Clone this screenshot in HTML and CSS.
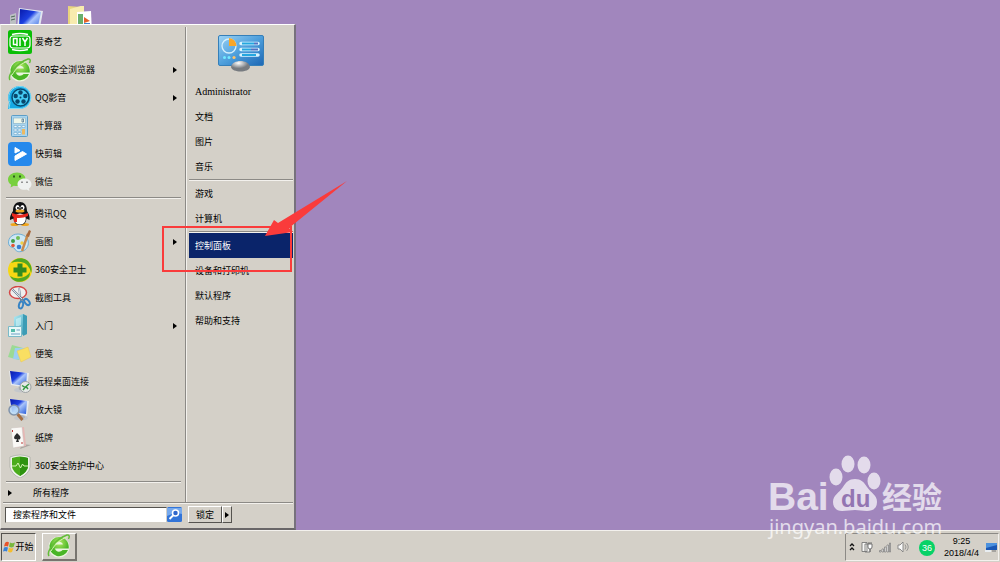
FILE: index.html
```
<!DOCTYPE html>
<html lang="zh-CN">
<head>
  <meta charset="utf-8">
  <title>开始菜单</title>
  <link rel="stylesheet" href="styles.css">
</head>
<body>
  <!-- Shared shapes and gradients -->
  <svg class="defs" aria-hidden="true">
    <defs>
      <linearGradient id="blue" x2="1" y2="1"><stop stop-color="#0718a8"/><stop offset=".4" stop-color="#1c3fe0"/><stop offset=".55" stop-color="#a9c4fb"/><stop offset="1" stop-color="#2258d8"/></linearGradient>
      <radialGradient id="lime" cx=".5" cy=".3"><stop stop-color="#b3ea62"/><stop offset="1" stop-color="#49b526"/></radialGradient>
      <linearGradient id="sky" x2="1" y2="1"><stop stop-color="#9dd3f5"/><stop offset=".5" stop-color="#4e9fdc"/><stop offset="1" stop-color="#1c66b4"/></linearGradient>
      <linearGradient id="aqua" x2="1" y2="1"><stop stop-color="#b5edf5"/><stop offset="1" stop-color="#268fae"/></linearGradient>
      <radialGradient id="silver" cx=".4" cy=".2"><stop stop-color="#fff"/><stop offset="1" stop-color="#777b80"/></radialGradient>
      <symbol id="browser" viewBox="0 0 24 24">
        <circle cx="12" cy="13" r="10.500" fill="#eaf5df"/>
        <path fill="url(#lime)" d="M12 3a9.600 9.600 0 1 0 9 13h-5.500c-2.300 2.800-7 1.900-7.500-1.500h13.800C22.300 7.500 18 3 12 3zm-3.800 7.500c1-3.500 6.800-3.700 7.700 0z"/>
        <path d="M2 22C-1 17 9 5 20 1c2-.5 3 1 1.500 4" fill="none" stroke="#62bd37" stroke-width="1.500"/>
        <path d="M4 17C8 10 14 5 20 3" fill="none" stroke="#d9f5b5" stroke-width="1"/>
      </symbol>
      <symbol id="monitor" viewBox="0 0 24 24">
        <ellipse cx="13" cy="20" rx="7" ry="2.500" fill="#c4c7cb"/>
        <path d="M10 14h6l1 6h-6z" fill="#aeb2b8"/>
        <path d="M1 1l20 2-2 15-16-3z" fill="#e7eaee"/>
        <path d="M2 1l17 2-1 13-14-2z" fill="url(#blue)"/>
      </symbol>
    </defs>
  </svg>

  <main class="desktop">
    <div class="desktop-icons">
      <svg class="desktop-icon" viewBox="0 0 34 30">
        <path d="M0 9l6-2v22H0z" fill="#bcc0c3"/><path d="M1 11l4-1M1 14l4-1" stroke="#4d6a58"/>
        <path d="M9 2l24 3-4 22-22-4z" fill="#e2e6ef"/><path d="M10 3l21 3-4 19-18-4z" fill="url(#blue)"/>
      </svg>
      <svg class="desktop-icon" viewBox="0 0 34 30">
        <path d="M0 0l13 1v27H0z" fill="#e9d47e"/><path d="M2 3l14-4v29H2z" fill="#f7ebae"/>
        <path d="M9 6l14-1 1 23H9z" fill="#fff"/><path d="M10 8h5v10h-5z" fill="#6aaf6c"/>
        <path d="M16 11l6 4-6 2z" fill="#e4622b"/><path d="M16 17h6v5h-6z" fill="#3a86cf"/>
      </svg>
    </div>

    <section class="start-menu">
      <div class="menu-columns">
        <nav class="programs">
          <ul>
            <li><a href="#">
              <svg class="icon" viewBox="0 0 24 24"><rect width="24" height="24" rx="2.500" fill="#0abe06"/><path d="M4 4.500q8-2 16 0M4 19.500q8 2 16 0" fill="none" stroke="#fff" stroke-width="1.300"/><rect x="2" y="6" width="20" height="12" rx="3" fill="none" stroke="#fff" stroke-width="1.200"/><path d="M5.500 8.500h3.500v6H5.500zM8 14l1.500 2M12 8v8M14.500 8l2.500 4 2.500-4M17 12v4" fill="none" stroke="#fff" stroke-width="1.500"/></svg>
              <span>爱奇艺</span></a></li>
            <li><a href="#"><svg class="icon"><use href="#browser"/></svg><span>360安全浏览器</span><i class="arrow"></i></a></li>
            <li><a href="#">
              <svg class="icon" viewBox="0 0 24 24"><path d="M0 23l1-7A11.500 11.500 0 1 1 12 23z" fill="#17a9e4"/><path d="M1 22.500l1-6A11 11 0 1 1 12 22.500z" fill="none" stroke="#79dcf8"/><circle cx="12.500" cy="11.500" r="8.500" fill="#45cdf5" stroke="#074a70" stroke-width="1.500"/><g fill="#09476c"><circle cx="12.500" cy="6.500" r="2.200"/><circle cx="17.300" cy="10" r="2.200"/><circle cx="15.500" cy="15.500" r="2.200"/><circle cx="9.500" cy="15.500" r="2.200"/><circle cx="7.700" cy="10" r="2.200"/><circle cx="12.500" cy="11.500" r="1"/></g></svg>
              <span>QQ影音</span><i class="arrow"></i></a></li>
            <li><a href="#">
              <svg class="icon" viewBox="0 0 24 24"><rect x="3.500" y="1.500" width="16" height="21" rx="1" fill="#a9d5ef" stroke="#5c9dc6"/><rect x="5.500" y="4" width="12" height="5.500" fill="#eef6e8" stroke="#80aec8" stroke-width=".6"/><path d="M14 5h1.500v3H14z" fill="none" stroke="#3c678b" stroke-width=".7"/><g fill="#edf7fd" stroke="#67a0c5" stroke-width=".5"><path d="M6 11.500h3v2H6zM10 11.500h3v2h-3zM6 15h3v2H6zM10 15h3v2h-3zM6 18.500h3v2H6zM10 18.500h3v2h-3zM14 11.500h3v2h-3z"/></g><path d="M14 15h3v5.500h-3z" fill="#edb961"/></svg>
              <span>计算器</span></a></li>
            <li><a href="#">
              <svg class="icon" viewBox="0 0 24 24"><rect width="24" height="24" rx="4" fill="#2589ec"/><path d="M7 5.500l5 3-5 2.500zM14.500 9.500L18.500 12 7 18.500V14z" fill="#fff" stroke="#fff" stroke-linejoin="round"/></svg>
              <span>快剪辑</span></a></li>
            <li><a href="#">
              <svg class="icon" viewBox="0 0 24 24"><path d="M9 2.500c-5 0-9 3-9 7 0 2.200 1.200 4 3.200 5.200L2.500 17.500l3.300-1.800c6 1.300 11.700-1.700 11.700-6.500C17.500 5.500 14 2.500 9 2.500z" fill="#78d03e"/><path d="M16.500 8.500c-4 0-7 2.500-7 5.700 0 3.900 4.500 6.400 9 5.300l3 1.500-.7-2.500c1.700-1 2.700-2.500 2.700-4.300 0-3.200-3-5.700-7-5.700z" fill="#eff1f0"/><path d="M6 5.500v2M12 5.500v2" stroke="#27521a" stroke-width="1.800"/><path d="M14 11.500v1.500M19 11.500v1.500" stroke="#777" stroke-width="1.500"/></svg>
              <span>微信</span></a></li>
          </ul>
          <hr>
          <ul>
            <li><a href="#">
              <svg class="icon" viewBox="0 0 24 24"><ellipse cx="6.500" cy="22.500" rx="4" ry="1.500" fill="#f0a51d"/><ellipse cx="17" cy="22.500" rx="4" ry="1.500" fill="#f0a51d"/><path d="M5 9C5 3 8 0 12 0s7 3 7 9c2 3 3 6 2.500 9l-3-1.500C18 21 16 23 12 23s-6-2-6.500-6.500L2 18c-.5-3 1-6 3-9z" fill="#101114"/><ellipse cx="12" cy="17" rx="5.800" ry="5.500" fill="#fff"/><ellipse cx="9.500" cy="5.500" rx="2" ry="2.500" fill="#fff"/><ellipse cx="14.500" cy="5.500" rx="2" ry="2.500" fill="#fff"/><circle cx="10" cy="6" r="1"/><circle cx="14" cy="6" r="1"/><ellipse cx="12" cy="9" rx="4.500" ry="1.500" fill="#efa822"/><path d="M4 11q8 3.500 16 0v3q-5 2.500-11 2v4H6l-.5-5L4 14z" fill="#e7271e"/></svg>
              <span>腾讯QQ</span></a></li>
            <li><a href="#">
              <svg class="icon" viewBox="0 0 24 24"><path d="M10 4C3 4-1 10 1 15c1.500 3 5 2 6 4 1 3 5 3.500 9 1.500 7-4 6-16-6-16.500z" fill="#cde7f5" stroke="#6eadd3"/><circle cx="5" cy="11" r="2" fill="#419c46"/><circle cx="10" cy="8" r="2" fill="#71bd55"/><circle cx="5" cy="15.500" r="1.800" fill="#e45533"/><circle cx="11" cy="17" r="2.300" fill="#387ed1"/><circle cx="14" cy="13" r="1.700" fill="#f0cf45"/><path d="M20 4l-6 17" stroke="#c88a4b" stroke-width="2.500"/><path d="M21 0l2 1-2 6-3-1z" fill="#a7683d"/></svg>
              <span>画图</span><i class="arrow"></i></a></li>
            <li><a href="#">
              <svg class="icon" viewBox="0 0 24 24"><circle cx="12" cy="12" r="12" fill="#f6d713"/><path d="M3 5C8-2 19-1 22 6c2 3 2 7 1 9Q21 5 13 4 8 3 3 5zM21 19C16 26 5 25 2 18q5 3 10 2 7-1 10-6 0 3-1 5z" fill="#51a825"/><path d="M9.500 5.500h5v4h4v5h-4v4h-5v-4h-4v-5h4z" fill="#318b20"/></svg>
              <span>360安全卫士</span></a></li>
            <li><a href="#">
              <svg class="icon" viewBox="0 0 24 24"><ellipse cx="10" cy="6.500" rx="8.500" ry="6" fill="#eee" stroke="#d54646" stroke-width="1.500"/><path d="M4 3l12 12M11 2l2 13" stroke="#718396" stroke-width="1.800"/><path d="M4 3l10 10M11 2l1 8" stroke="#f8fbff" stroke-width=".8"/><g fill="none" stroke="#3683c4" stroke-width="2"><ellipse cx="13" cy="19" rx="2" ry="3.500" transform="rotate(15 13 19)"/><ellipse cx="19" cy="16" rx="2" ry="3.500" transform="rotate(-40 19 16)"/></g></svg>
              <span>截图工具</span></a></li>
            <li><a href="#">
              <svg class="icon" viewBox="0 0 24 24"><path d="M6 3l9-3 4 2v18L6 22z" fill="url(#aqua)"/><path d="M15 0l4 2v18l-4 2z" fill="#3c9cb5"/><path d="M8 5l5-2v8l-5 2z" fill="#d5f6f9" opacity=".6"/><path d="M.5 12.500h13v10H.5z" fill="#e8f8f8" stroke="#7bbac8"/><path d="M3 15h4v3H3z" fill="#54bca9"/><path d="M8.500 16H12M3 20h9" stroke="#6f9fc4"/></svg>
              <span>入门</span><i class="arrow"></i></a></li>
            <li><a href="#">
              <svg class="icon" viewBox="0 0 24 24"><path d="M4 3l11 3-4 12-11-3z" fill="#9bda94"/><path d="M7 6h11l-1 12-12-1z" fill="#9dcff1"/><path d="M9 9l11-4 3 10-10 5z" fill="#f9df62" stroke="#e9c850" stroke-width=".5"/></svg>
              <span>便笺</span></a></li>
            <li><a href="#">
              <svg class="icon" viewBox="0 0 24 24"><use href="#monitor"/><circle cx="17.500" cy="17" r="5.500" fill="#e6e8e6" stroke="#9da2a3"/><path d="M14 15.500l3 2-2 2.500M21 14l-3 2.500 2 2.500" fill="none" stroke="#369743" stroke-width="1.500"/></svg>
              <span>远程桌面连接</span></a></li>
            <li><a href="#">
              <svg class="icon" viewBox="0 0 24 24"><use href="#monitor"/><path d="M9.500 16l5 6" stroke="#a56e42" stroke-width="3"/><circle cx="6" cy="12" r="5" fill="#b8dbf7" fill-opacity=".85" stroke="#8193ab" stroke-width="1.500"/></svg>
              <span>放大镜</span></a></li>
            <li><a href="#">
              <svg class="icon" viewBox="0 0 24 24"><path d="M14 18l9 1-11 4z" fill="#aaa6a0"/><path d="M4 2l12-1 2 19-11 2z" fill="#e6b6b4"/><path d="M3 2l11-1 2 19-11 2z" fill="#faf9f6" stroke="#c7c4bf" stroke-width=".5"/><path d="M9 7q5 4 3 6-1 1-2 0l1 3H8l1-3q-2 1-3-1 0-2 3-5z" fill="#292b2c"/><path d="M4.500 4v2M14 16v2" stroke="#bb3635"/></svg>
              <span>纸牌</span></a></li>
            <li><a href="#">
              <svg class="icon" viewBox="0 0 24 24"><path d="M2 3q10-4 20 0v10q-1 7-10 11Q3 20 2 13z" fill="#f0f2ec" stroke="#9b9f98" stroke-width=".6"/><path d="M4 4q8-3 16 0v9q-1 5-8 9-7-4-8-9z" fill="#4aac1b"/><path d="M12 3q5 0 8 1v9q-1 5-8 9z" fill="#2d9310"/><path d="M4 12h4l2-3 2.500 5 2-4 1.500 2h4" fill="none" stroke="#d8f6b8"/></svg>
              <span>360安全防护中心</span></a></li>
          </ul>
          <hr>
          <a class="all-programs" href="#"><i class="arrow"></i><span>所有程序</span></a>
        </nav>

        <nav class="places">
          <div class="picture">
            <svg viewBox="0 0 46 38">
              <rect x=".5" y=".5" width="45" height="30" rx="1.500" fill="url(#sky)" stroke="#357fb9"/>
              <circle cx="11" cy="11" r="7" fill="none" stroke="#d4effd" stroke-width="1.300"/><path d="M11 11V3a8 8 0 0 1 7.500 8z" fill="#f8a629"/>
              <g stroke="#d8f4ff" stroke-width="3.500" stroke-linecap="round"><path d="M23 8.500h17M23 14.500h17M23 20h17"/></g>
              <g stroke="#24a7df" stroke-width="1.800"><path d="M24 8.500h12M24 14.500h9M24 20h14"/></g><path d="M36 8.500h4M33 14.500h7" stroke="#5271c2" stroke-width="1.800"/>
              <circle cx="6.500" cy="22.500" r="1.500" fill="#73eaff"/><circle cx="11" cy="22.500" r="1.500" fill="#73eaff"/><circle cx="16" cy="22.500" r="1.600" fill="#ffc269"/>
              <path d="M13 32c1-8 18-8 19 0-1 6-18 6-19 0z" fill="url(#silver)"/>
            </svg>
          </div>
          <a class="user" href="#">Administrator</a>
          <a href="#">文档</a>
          <a href="#">图片</a>
          <a href="#">音乐</a>
          <hr>
          <a href="#">游戏</a>
          <a href="#">计算机</a>
          <hr>
          <a class="selected" href="#">控制面板</a>
          <a href="#">设备和打印机</a>
          <a href="#">默认程序</a>
          <a href="#">帮助和支持</a>
        </nav>
      </div>

      <div class="menu-footer">
        <form class="search">
          <input type="text" value="搜索程序和文件" aria-label="搜索程序和文件">
          <button type="button" aria-label="搜索"><svg viewBox="0 0 15 15"><rect width="15" height="15" rx="1.500" fill="#3274d8"/><path d="M0 1h15v6q-7-2-15 2z" fill="#76a9ed"/><circle cx="8.500" cy="6" r="3" fill="#2f66cc" stroke="#fff" stroke-width="1.500"/><path d="M6 8.500L2.500 12" stroke="#fff" stroke-width="2"/></svg></button>
        </form>
        <div class="power">
          <button type="button">锁定</button>
          <button type="button" class="power-more" aria-label="更多"><i class="arrow"></i></button>
        </div>
      </div>

      <!-- Red frame and arrow over the control panel entry -->
      <svg class="callout" viewBox="0 0 186 92" aria-hidden="true">
        <rect x="1" y="46" width="128" height="44" fill="none" stroke="#fa3b3b" stroke-width="2"/>
        <path d="M185 0l-58 47 4 4-28 4 9-16 4 3z" fill="#fa3b3b"/>
      </svg>
    </section>
  </main>

  <footer class="taskbar">
    <button type="button" class="start-button">
      <svg viewBox="0 0 12 12"><path d="M2 2q2-2 4-.5L5 5.500Q3 4.500 1 5.500z" fill="#e8542b"/><path d="M7 1.500q2 1.500 5 0L10.500 6Q8 7 6 5.500z" fill="#79b83e"/><path d="M1 6.500q2-1 4 0L4 10.500Q2 9.500 0 10.500z" fill="#3981d5"/><path d="M6 6.500q2 1.500 4.500.5L9 11q-2 1-4-.5z" fill="#f5bd2d"/></svg>
      <span>开始</span>
    </button>
    <button type="button" class="task-button" aria-label="360安全浏览器"><svg><use href="#browser"/></svg></button>
    <div class="tray">
      <svg class="chevrons" viewBox="0 0 6 12"><path d="M1 5l2-2 2 2M1 9l2-2 2 2" fill="none" stroke="#111" stroke-width="1.300"/></svg>
      <svg viewBox="0 0 12 12"><path d="M1 1.500h5v9H1zM4 3h5v8H4z" fill="#f7f7f5" stroke="#777" stroke-width=".9"/><path d="M7 3h4v3q0 2-2 2T7 6zM8 1v2M10 1v2M9 8v3" fill="#fff" stroke="#666" stroke-width=".9"/></svg>
      <svg viewBox="0 0 12 12"><path d="M.5 9.500h1.500v1.500H.5zM3 8h1.500v3H3zM5.500 6h1.500v5H5.500zM8 4h1.500v7H8zM10.500 2h1v9h-1z" fill="#fff" stroke="#777" stroke-width=".7"/></svg>
      <svg viewBox="0 0 12 12"><path d="M1 4h2l3-3v10L3 8H1z" fill="#f8f8f8" stroke="#777" stroke-width=".8"/><path d="M8 3.500q2 2.500 0 5M9.500 2q3.500 4 0 8" fill="none" stroke="#888" stroke-width=".8"/></svg>
      <span class="score">36</span>
      <time class="clock" datetime="2018-04-04T09:25"><span>9:25</span><span>2018/4/4</span></time>
      <svg viewBox="0 0 12 12"><path d="M1 2h11v7H1z" fill="#1b58b5"/><path d="M1 2h11v2L1 7z" fill="#4c91de"/><path d="M0 9h6v2H0z" fill="#e8edf1"/><path d="M7 10h4" stroke="#777"/></svg>
    </div>
  </footer>

  <svg class="watermark" viewBox="0 0 180 88">
    <g fill="#fff">
      <text class="brand" x="1" y="55">Bai</text>
      <ellipse cx="69" cy="22" rx="6.500" ry="8.500"/><ellipse cx="81" cy="9" rx="6.500" ry="8.500"/><ellipse cx="97" cy="10" rx="6.500" ry="8.500"/><ellipse cx="107" cy="26" rx="6.500" ry="8.500"/>
      <path d="M88 24c6 0 9 3 12 8 4 6 10 8 10 15s-5 9-10 9c-5 0-8-1-12-1s-8 1-13 1c-6 0-9-4-9-9 0-7 6-9 10-15 3-5 6-8 12-8z"/>
      <text class="section" x="115" y="53">经验</text>
      <text class="address" x="2" y="79">jingyan.baidu.com</text>
    </g>
    <text class="du" x="74" y="52">du</text>
  </svg>
</body>
</html>
```
FILE: styles.css
```
* {
  box-sizing: border-box;
}

html, body {
  height: 100%;
  margin: 0;
}

body {
  display: flex;
  flex-direction: column;
  position: relative;
  overflow: hidden;
  background: #a186bd;
  color: #000;
  font: 9px/12px "Noto Sans CJK SC", sans-serif;
}

a {
  color: inherit;
  text-decoration: none;
}

ul {
  list-style: none;
  margin: 0;
  padding: 0;
}

button, input {
  font: inherit;
  color: inherit;
  margin: 0;
}

svg {
  display: block;
  flex: none;
}

.defs {
  position: absolute;
  width: 0;
  height: 0;
}

hr {
  height: 2px;
  margin: 0;
  border: 0;
  border-top: 1px solid #8c8a86;
  border-bottom: 1px solid #f3f1ed;
}

.desktop {
  flex: 1;
  position: relative;
}

.desktop-icons {
  display: flex;
  gap: 24px;
  padding: 6px 10px;
}

.desktop-icon {
  width: 34px;
  height: 30px;
}

/* Start menu, opens upward from the taskbar */
.start-menu {
  position: absolute;
  left: 0;
  bottom: 0;
  width: 296px;
  padding: 2px 1px 3px 2px;
  background: #d4d0c8;
  border: 1px solid #e9e6e1;
  border-top-color: #fff;
  border-right: 2px solid #77717c;
  border-bottom: 2px solid #696668;
}

.menu-columns {
  display: flex;
  border-bottom: 1px solid #8c8a86;
}

.programs {
  width: 183px;
  padding-top: 1px;
  border-right: 1px solid #8c8a86;
}

.programs li a {
  display: flex;
  align-items: center;
  gap: 3px;
  height: 28px;
  padding: 0 8px 0 5px;
}

.programs hr {
  margin: 1px 4px 1px 3px;
}

.icon {
  width: 24px;
  height: 24px;
}

.arrow {
  display: block;
  width: 0;
  height: 0;
  border: 3px solid transparent;
  border-left: 4px solid #000;
  border-right: 0;
}

.programs li .arrow {
  margin-left: auto;
}

.all-programs {
  display: flex;
  align-items: center;
  gap: 21px;
  height: 18px;
  padding-left: 5px;
}

.places {
  flex: 1;
  padding-left: 2px;
  border-left: 1px solid #f3f1ed;
}

.picture {
  display: flex;
  justify-content: center;
  height: 52px;
  padding-top: 8px;
}

.picture svg {
  width: 46px;
  height: 38px;
}

.places a {
  display: flex;
  align-items: center;
  height: 25px;
  padding-left: 6px;
}

.places .user {
  font-family: "Liberation Serif", serif;
  font-size: 10px;
}

.places .selected {
  background: #0a246a;
  color: #fff;
}

.menu-footer {
  display: flex;
  gap: 6px;
  padding: 2px 0 2px 2px;
  border-top: 1px solid #f3f1ed;
}

.search {
  display: flex;
  align-items: center;
  width: 177px;
}

.search input {
  flex: 1;
  min-width: 0;
  height: 16px;
  padding: 0 7px;
  background: #fff;
  border: 1px solid #d4d0c8;
  border-top-color: #55534f;
  border-left-color: #55534f;
}

.search button {
  padding: 0;
  border: 0;
  background: none;
}

.search button svg {
  width: 15px;
  height: 15px;
}

.power {
  display: flex;
}

.power button {
  height: 17px;
  padding: 0 7px;
  background: #d4d0c8;
  border: 1px solid #fff;
  border-right-color: #55534f;
  border-bottom-color: #55534f;
}

.power .power-more {
  padding: 0 2px;
}

.callout {
  position: absolute;
  left: 161px;
  top: 156px;
  width: 186px;
  height: 92px;
  pointer-events: none;
}

/* Taskbar */
.taskbar {
  display: flex;
  align-items: center;
  gap: 6px;
  height: 32px;
  padding: 1px;
  background: #d4d0c8;
  border-top: 1px solid #f3f1ed;
}

.start-button, .task-button {
  display: flex;
  align-items: center;
  justify-content: center;
  width: 35px;
  height: 28px;
  padding: 0;
  background: #d4d0c8;
  border: 1px solid #fff;
  border-right: 2px solid #77746f;
  border-bottom: 2px solid #77746f;
}

.start-button {
  border: 1px solid #55534f;
  border-right-color: #fff;
  border-bottom-color: #fff;
}

.start-button svg {
  width: 12px;
  height: 12px;
}

.task-button svg {
  width: 24px;
  height: 24px;
}

.tray {
  display: flex;
  align-items: center;
  gap: 6px;
  height: 28px;
  margin-left: auto;
  padding: 0 1px 0 3px;
  border: 1px solid #8c8a86;
  border-right-color: #f3f1ed;
  border-bottom-color: #f3f1ed;
}

.tray svg {
  width: 12px;
  height: 12px;
}

.tray .chevrons {
  width: 6px;
}

.score {
  width: 16px;
  margin: 2px 3px 0 4px;
  border-radius: 50%;
  background: #07d267;
  color: #fff;
  font: 9px/16px "Liberation Sans", sans-serif;
  text-align: center;
}

.clock {
  display: flex;
  flex-direction: column;
  align-items: center;
  font: 9px/12px "Liberation Sans", sans-serif;
}

/* Watermark sits above everything, partly over the taskbar */
.watermark {
  position: absolute;
  right: 53px;
  bottom: 19px;
  width: 180px;
  height: 88px;
  overflow: visible;
  opacity: 0.7;
  pointer-events: none;
}

.brand, .du {
  font: bold 39px "Liberation Sans", sans-serif;
}

.du {
  font-size: 24px;
  fill: #8e6fae;
}

.section {
  font: bold 30px "Noto Sans CJK SC", sans-serif;
}

.address {
  font: 20px "Noto Sans", sans-serif;
}
```
